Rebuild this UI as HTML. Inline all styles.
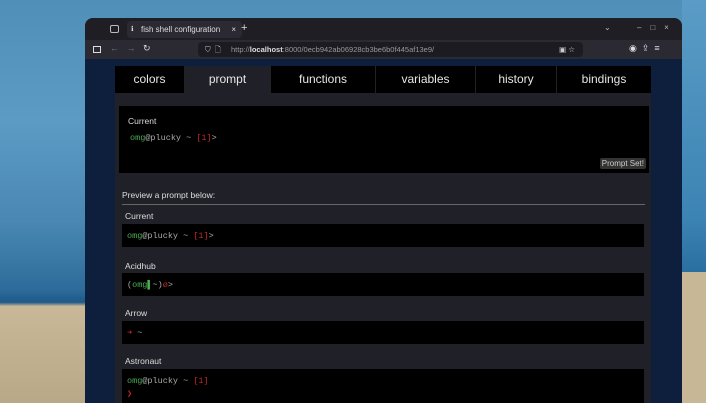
<!DOCTYPE html>
<html><head><style>
*{margin:0;padding:0;box-sizing:border-box}
html,body{width:706px;height:403px;overflow:hidden}
body{position:relative;font-family:"Liberation Sans","DejaVu Sans",sans-serif;
background:linear-gradient(180deg,#4f8fb8 0%,#5b9bc4 30%,#4a88b3 55%,#2d6b9a 72%,#1f5a88 75%,#c9b897 76%,#b8a888 100%);}
.sandR{position:absolute;left:682px;top:272px;width:24px;height:131px;background:#c8b797}
.seaR{position:absolute;left:682px;top:0;width:24px;height:272px;background:linear-gradient(180deg,#5a9cc6,#3c84b4 80%,#2a6fa0)}
.win{position:absolute;left:85px;top:18px;width:597px;height:385px;background:#0e1f3d;border-radius:8px 8px 0 0;overflow:hidden}
.title{height:22px;background:#1f1e24;position:relative;color:#ddd;font-size:8px}
.toolbar{height:19px;background:#2b2a33;position:relative;color:#aaa;font-size:7px}
.url{position:absolute;left:113px;top:2px;width:385px;height:15px;background:#1c1b22;border-radius:4px;color:#999;line-height:15px;padding-left:33px;font-size:7.5px}
.tab{position:absolute;left:42px;top:3px;width:115px;height:17px;background:#2b2a33;border-radius:4px;line-height:17px;padding-left:14px}
.tabs{position:absolute;left:30px;top:48px;width:536px;height:27px;background:#000;display:flex;color:#e6e6e6;font-size:12px}
.tabs div{line-height:27px;text-align:center;border-right:1px solid #222}
.panel{position:absolute;left:30px;top:75px;width:536px;height:330px;background:#202128}
.box{position:absolute;background:#000;font-family:"Liberation Mono","DejaVu Sans Mono",monospace;font-size:8.5px;color:#aaa;padding:7px 0 0 5px}
.lbl{position:absolute;color:#ddd;font-size:8.5px}
.g{color:#4caf50}.r{color:#c62828}
</style></head><body>
<div class="seaR"></div><div class="sandR"></div>
<div class="win">
 <div class="title">
  <div style="position:absolute;left:25px;top:7px;width:9px;height:8px;border:1px solid #bbb;border-radius:2px"></div>
  <div class="tab"><span style="position:absolute;left:4px;top:0;font-size:7px">ℹ</span>fish shell configuration<span style="position:absolute;right:6px">×</span></div>
  <div style="position:absolute;left:156px;top:4px;font-size:11px">+</div>
  <div style="position:absolute;left:519px;top:5px;font-size:8px;color:#bbb">⌄</div>
  <div style="position:absolute;left:552px;top:5px;font-size:8px;color:#bbb">–&nbsp;&nbsp;&nbsp;&nbsp;□&nbsp;&nbsp;&nbsp;&nbsp;×</div>
 </div>
 <div class="toolbar">
  <div style="position:absolute;left:8px;top:6px;width:8px;height:7px;border:1px solid #ddd"></div>
  <div style="position:absolute;left:25px;top:3px;font-size:9px;color:#777">←&nbsp;&nbsp;&nbsp;→&nbsp;&nbsp;&nbsp;<span style="color:#ddd">↻</span></div>
  <div class="url"><span style="position:absolute;left:7px;color:#ccc">⛉&nbsp;&nbsp;🗋</span>http://<b style="color:#ddd">localhost</b>:8000/0ecb942ab06928cb3be6b0f445af13e9/<span style="position:absolute;right:8px;color:#ccc">▣&nbsp;☆</span></div>
  <div style="position:absolute;left:544px;top:3px;font-size:9px;color:#ddd">◉&nbsp;&nbsp;⇪&nbsp;&nbsp;≡</div>
 </div>
 <div class="tabs">
  <div style="width:70px">colors</div>
  <div style="width:86px;background:#202128">prompt</div>
  <div style="width:105px">functions</div>
  <div style="width:100px">variables</div>
  <div style="width:81px">history</div>
  <div style="width:94px;border:none">bindings</div>
 </div>
 <div class="panel">
  <div class="box" style="left:4px;top:13px;width:530px;height:67px">
   <div style="font-family:'Liberation Sans',sans-serif;color:#ddd;font-size:8.5px;margin:3px 0 0 4px">Current</div>
   <div style="margin:7px 0 0 6px"><span class="g">omg</span>@plucky ~ <span class="r">[1]</span>&gt;</div>
   <div style="position:absolute;right:3px;top:52px;background:#333;color:#ccc;font-family:'Liberation Sans',sans-serif;font-size:8px;padding:1px 2px;border-radius:2px">Prompt Set!</div>
  </div>
  <div class="lbl" style="left:7px;top:97px">Preview a prompt below:</div>
  <div style="position:absolute;left:7px;top:111px;width:523px;height:1px;background:#666"></div>
  <div class="lbl" style="left:10px;top:118px">Current</div>
  <div class="box" style="left:7px;top:131px;width:522px;height:23px"><span class="g">omg</span>@plucky ~ <span class="r">[1]</span>&gt;</div>
  <div class="lbl" style="left:10px;top:168px">Acidhub</div>
  <div class="box" style="left:7px;top:180px;width:522px;height:23px">(<span class="g">omg▌</span>~)<span class="r">ø</span>&gt;</div>
  <div class="lbl" style="left:10px;top:215px">Arrow</div>
  <div class="box" style="left:7px;top:228px;width:522px;height:23px"><span class="r">➜</span> ~</div>
  <div class="lbl" style="left:10px;top:263px">Astronaut</div>
  <div class="box" style="left:7px;top:276px;width:522px;height:40px"><span class="g">omg</span>@plucky ~ <span class="r">[1]</span><br><span class="r" style="line-height:16px">❯</span></div>
 </div>
</div>
</body></html>
